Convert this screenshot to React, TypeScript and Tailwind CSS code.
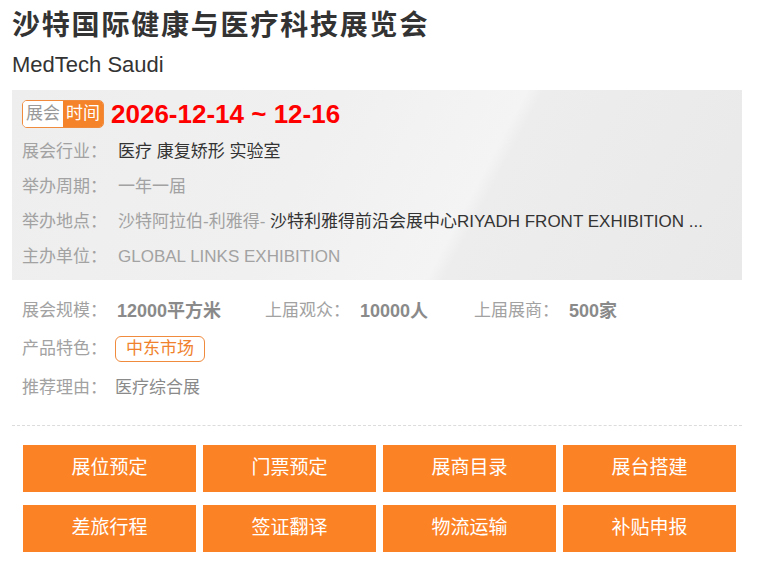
import React from 'react';

const font = "font-['Liberation_Sans','Noto_Sans_CJK_SC',sans-serif]";

interface InfoRowProps {
    label: string;
    children: React.ReactNode;
}

const InfoRow: React.FC<InfoRowProps> = ({ label, children }) => (
    <div className="flex h-[35px] items-center text-[17px]">
        <span className="w-[96px] shrink-0 text-[#a2a2a2]">{label}</span>
        <div className="min-w-0 flex-1 truncate">{children}</div>
    </div>
);

interface StatProps {
    label: string;
    value: string;
    className?: string;
}

const Stat: React.FC<StatProps> = ({ label, value, className = '' }) => (
    <div className={`flex items-center ${className}`}>
        <span className="w-[95px] shrink-0 text-[17px] text-[#a2a2a2]">{label}</span>
        <span className="text-[18px] font-bold text-[#8a8a8a]">{value}</span>
    </div>
);

const actions = ['展位预定', '门票预定', '展商目录', '展台搭建', '差旅行程', '签证翻译', '物流运输', '补贴申报'];

export default function App() {
    return (
        <div className={`${font} w-[760px] h-[568px] bg-white overflow-hidden`}>
            <div className="ml-[12px] w-[730px] pt-[6px]">
                <h1 className="text-[28px] leading-[40px] font-bold tracking-[1.8px] text-[#333]">沙特国际健康与医疗科技展览会</h1>
                <p className="mt-[7px] text-[22px] leading-[24px] text-[#333]">MedTech Saudi</p>

                <div className="mt-[13px] h-[190px] px-[10px] pt-[10px] bg-[linear-gradient(118deg,#eeeeee_0%,#f0f0f0_40%,#f4f4f4_62%,#ededed_64%,#e9e9e9_100%)]">
                    <div className="flex h-[27px] items-center">
                        <div className="flex h-[28px] overflow-hidden rounded-[5px] border border-[#f08a3c] text-[17px] leading-none">
                            <span className="flex items-center bg-white px-[3px] text-[#999]">展会</span>
                            <span className="flex items-center bg-[#f5832a] px-[3px] text-white">时间</span>
                        </div>
                        <span className="ml-[7px] text-[26px] font-bold leading-none text-[#f00]">2026-12-14 ~ 12-16</span>
                    </div>
                    <div className="mt-[7.5px]">
                        <InfoRow label="展会行业：">
                            <span className="text-[#333]">医疗 康复矫形 实验室</span>
                        </InfoRow>
                        <InfoRow label="举办周期：">
                            <span className="text-[#a2a2a2]">一年一届</span>
                        </InfoRow>
                        <InfoRow label="举办地点：">
                            <span className="text-[#a2a2a2]">沙特阿拉伯-利雅得- </span>
                            <span className="text-[#333]">沙特利雅得前沿会展中心RIYADH FRONT EXHIBITION ...</span>
                        </InfoRow>
                        <InfoRow label="主办单位：">
                            <span className="text-[#a2a2a2]">GLOBAL LINKS EXHIBITION</span>
                        </InfoRow>
                    </div>
                </div>

                <div className="px-[10px] pt-[13px]">
                    <div className="flex h-[36px] items-center">
                        <Stat label="展会规模：" value="12000平方米" className="w-[243px]" />
                        <Stat label="上届观众：" value="10000人" className="w-[209px]" />
                        <Stat label="上届展商：" value="500家" />
                    </div>
                    <div className="flex h-[39px] items-center">
                        <span className="w-[93px] shrink-0 text-[17px] text-[#a2a2a2]">产品特色：</span>
                        <span className="flex h-[26px] items-center rounded-[6px] border border-[#f08a3c] px-[10px] text-[17px] text-[#f0822e]">中东市场</span>
                    </div>
                    <div className="flex h-[40px] items-center">
                        <span className="w-[93px] shrink-0 text-[17px] text-[#a2a2a2]">推荐理由：</span>
                        <span className="text-[17px] text-[#8a8a8a]">医疗综合展</span>
                    </div>
                </div>

                <div className="mt-[17px] border-t border-dashed border-[#dcdcdc]" />

                <div className="ml-[11px] mt-[19px] grid w-[713px] grid-cols-4 gap-x-[7px] gap-y-[13px]">
                    {actions.map((a) => (
                        <div key={a} className="flex h-[47px] items-center justify-center bg-[#fc8226] text-[19px] text-white">
                            {a}
                        </div>
                    ))}
                </div>
            </div>
        </div>
    );
}
